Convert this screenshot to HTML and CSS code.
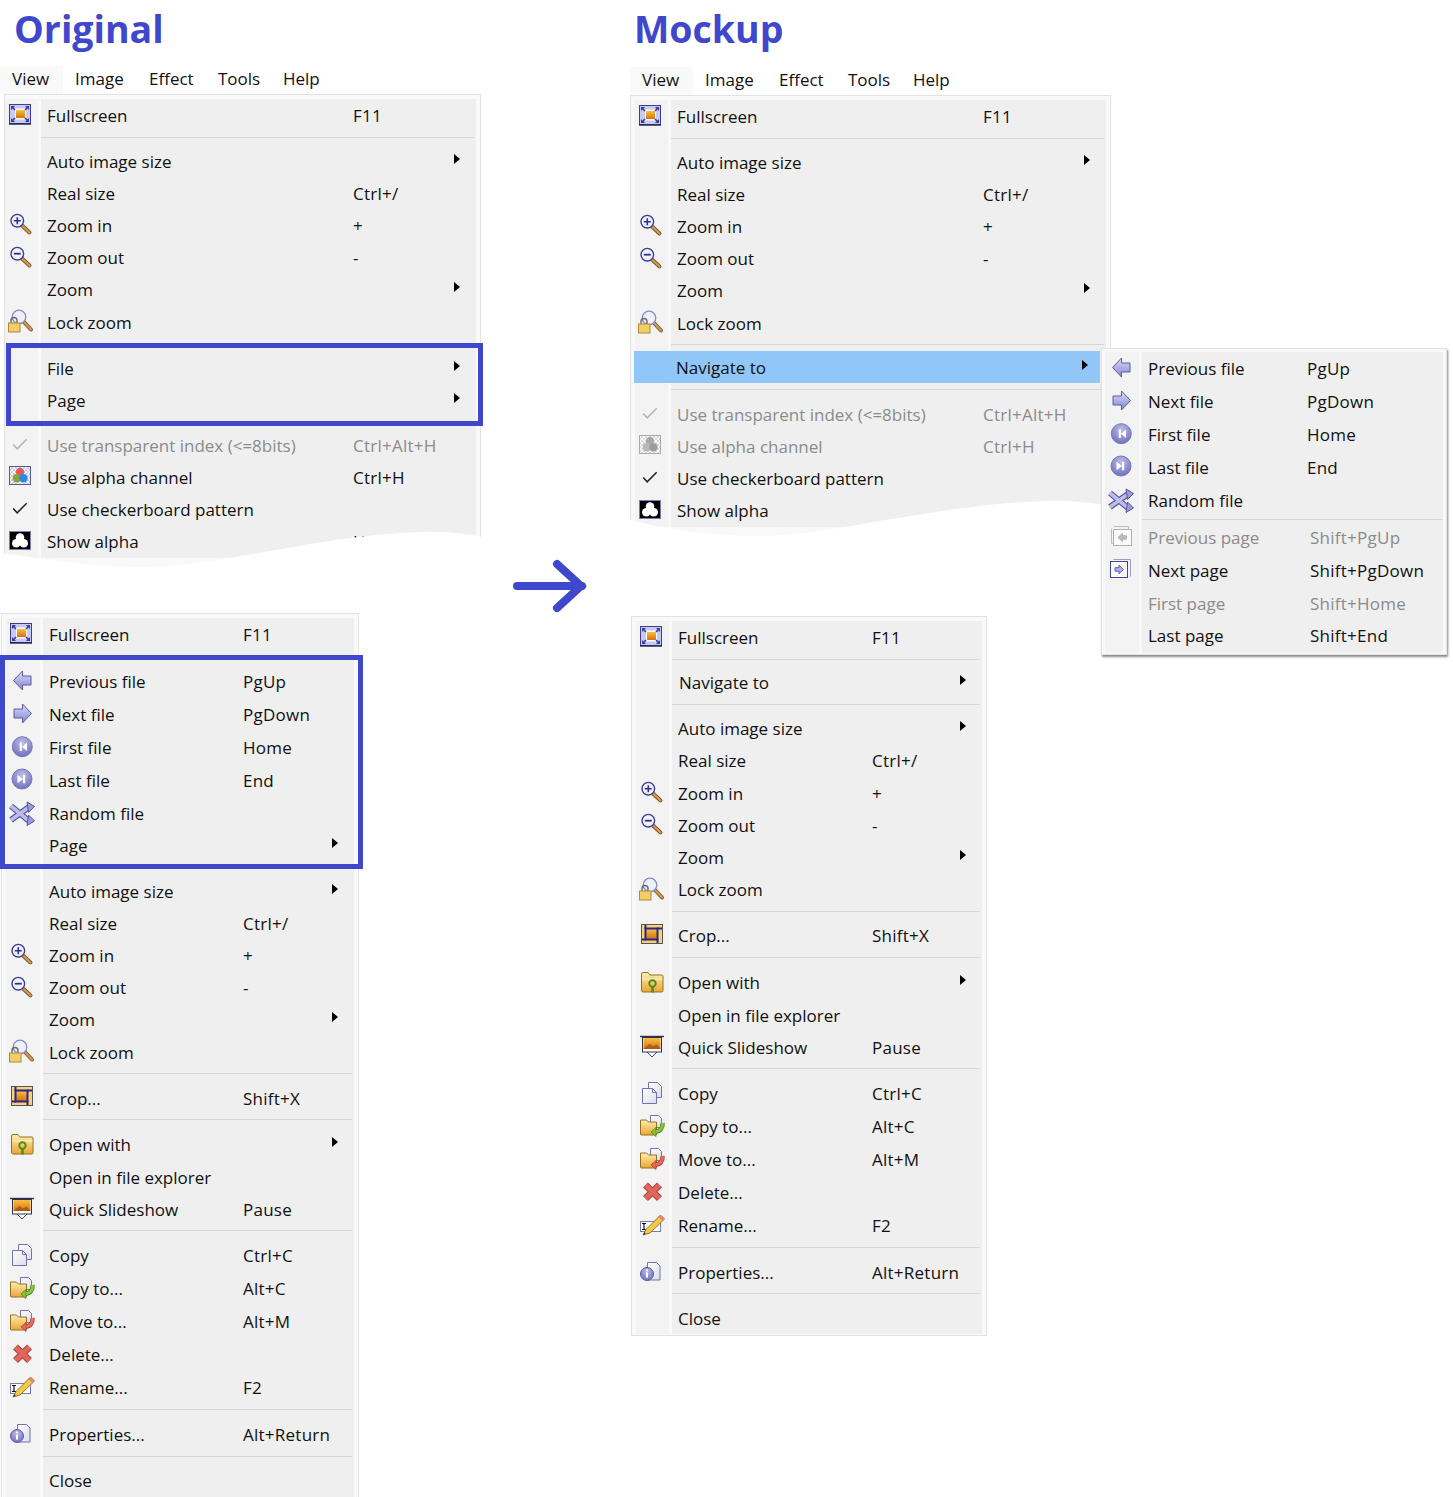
FILE: index.html
```html
<!DOCTYPE html>
<html lang="en">
<head>
  <meta charset="UTF-8">
  <title>Original and mockup of the view menu</title>
  <link rel="stylesheet" href="styles.css">
</head>
<body>

<!-- icon sheet, each icon is drawn on a 28x28 box -->
<svg class="sheet" aria-hidden="true">
  <defs>
    <linearGradient id="g-arrow" x1="0" y1="0" x2="0" y2="1"><stop offset="0" stop-color="#dcdcf8"/><stop offset="1" stop-color="#8484d2"/></linearGradient>
    <radialGradient id="g-ball" cx=".5" cy=".3" r=".75"><stop offset="0" stop-color="#bcbce8"/><stop offset="1" stop-color="#6c6cbc"/></radialGradient>
    <linearGradient id="g-photo" x1="0" y1="0" x2="0" y2="1"><stop offset="0" stop-color="#f8c040"/><stop offset="1" stop-color="#d87010"/></linearGradient>
    <linearGradient id="g-folder" x1="0" y1="0" x2="0" y2="1"><stop offset="0" stop-color="#ffeeb0"/><stop offset="1" stop-color="#e8a636"/></linearGradient>
    <linearGradient id="g-page" x1="0" y1="0" x2="1" y2="1"><stop offset="0" stop-color="#ffffff"/><stop offset="1" stop-color="#dcdce8"/></linearGradient>
    <pattern id="p-check" width="4" height="4" patternUnits="userSpaceOnUse"><rect width="4" height="4" fill="#fff"/><rect width="2" height="2" fill="#c9c9ee"/><rect x="2" y="2" width="2" height="2" fill="#c9c9ee"/></pattern>
    <pattern id="p-check-g" width="4" height="4" patternUnits="userSpaceOnUse"><rect width="4" height="4" fill="#fff"/><rect width="2" height="2" fill="#d8d8d8"/><rect x="2" y="2" width="2" height="2" fill="#d8d8d8"/></pattern>

    <symbol id="i-full" viewBox="0 0 28 28">
      <rect x="2.5" y="2.5" width="21" height="19" fill="#c9c9f5" stroke="#3c3c90"/>
      <path d="M2 22h22" stroke="#20204a" stroke-width="1.4"/>
      <rect x="8" y="6.5" width="11" height="11" fill="#fff"/>
      <rect x="9" y="8" width="9" height="8" fill="url(#g-photo)"/>
      <path d="M4 4h4l-1.4 1.4 2 2-1.2 1.2-2-2L4 8zM22 4h-4l1.4 1.4-2 2 1.2 1.2 2-2L22 8zM4 20h4l-1.4-1.4 2-2-1.2-1.2-2 2L4 16zM22 20h-4l1.400-1.400-2-2 1.200-1.200 2 2L22 16z" fill="#3c3ca0"/>
    </symbol>
    <symbol id="i-zoom-in" viewBox="0 0 28 28">
      <path d="M15 14.5l7.5 7" stroke="#7a5a30" stroke-width="4" stroke-linecap="round"/>
      <path d="M15 14.5l7.5 7" stroke="#d09a50" stroke-width="2.2" stroke-linecap="round"/>
      <circle cx="10.3" cy="9.7" r="6.3" fill="#f2f2fd" stroke="#3c3c98" stroke-width="1.4"/>
      <path d="M10.3 6.2v7M6.8 9.7h7" stroke="#30308c" stroke-width="1.6"/>
    </symbol>
    <symbol id="i-zoom-out" viewBox="0 0 28 28">
      <path d="M15 14.5l7.5 7" stroke="#7a5a30" stroke-width="4" stroke-linecap="round"/>
      <path d="M15 14.5l7.5 7" stroke="#d09a50" stroke-width="2.2" stroke-linecap="round"/>
      <circle cx="10.3" cy="9.7" r="6.3" fill="#f2f2fd" stroke="#3c3c98" stroke-width="1.4"/>
      <path d="M6.8 9.7h7" stroke="#30308c" stroke-width="1.8"/>
    </symbol>
    <symbol id="i-lock" viewBox="0 0 28 28">
      <path d="M17 14l7 7.5" stroke="#7a5a30" stroke-width="4" stroke-linecap="round"/>
      <path d="M17 14l7 7.5" stroke="#d09a50" stroke-width="2.2" stroke-linecap="round"/>
      <circle cx="12" cy="9" r="6.8" fill="#eef0fb" stroke="#8a8ac4" stroke-width="1.3"/>
      <path d="M4 15v-2.5a3 3 0 0 1 6 0V15" fill="none" stroke="#6a6a6a" stroke-width="1.4"/>
      <rect x="1.5" y="15" width="11.5" height="9" fill="#f3cd68" stroke="#ae8a3a"/>
    </symbol>
    <symbol id="i-check" viewBox="0 0 28 28">
      <path d="M6.200 13.500l4 4.300 9.500-9.600" fill="none" stroke="#222" stroke-width="1.5"/>
    </symbol>
    <symbol id="i-check-off" viewBox="0 0 28 28">
      <path d="M6.200 13.500l4 4.300 9.500-9.600" fill="none" stroke="#b4b4b4" stroke-width="1.5"/>
    </symbol>
    <symbol id="i-alpha" viewBox="0 0 28 28">
      <rect x="2.5" y="3.5" width="21" height="18" fill="url(#p-check)" stroke="#5a5a96"/>
      <circle cx="13" cy="9" r="4.2" fill="#e45a5a"/>
      <circle cx="9.8" cy="15.2" r="4.2" fill="#86a82e"/>
      <circle cx="16.4" cy="15.2" r="4.2" fill="#2c86e6"/>
    </symbol>
    <symbol id="i-alpha-off" viewBox="0 0 28 28">
      <rect x="2.5" y="3.5" width="21" height="18" fill="url(#p-check-g)" stroke="#ababab"/>
      <circle cx="13" cy="9" r="4.2" fill="#a8a8a8"/>
      <circle cx="9.8" cy="15.2" r="4.2" fill="#b8b8b8"/>
      <circle cx="16.4" cy="15.2" r="4.2" fill="#9c9c9c"/>
    </symbol>
    <symbol id="i-show" viewBox="0 0 28 28">
      <rect x="2.5" y="3.5" width="21" height="18" fill="#000" stroke="#7c7cb0"/>
      <circle cx="13" cy="9.5" r="4.300" fill="#fff"/>
      <circle cx="9.300" cy="15.300" r="4.300" fill="#fff"/>
      <circle cx="16.700" cy="15.300" r="4.300" fill="#fff"/>
    </symbol>
    <symbol id="i-prev" viewBox="0 0 28 28">
      <path d="M5.500 12.500L14.500 3v5h8.500v9h-8.500v5z" fill="url(#g-arrow)" stroke="#5c5ca4"/>
    </symbol>
    <symbol id="i-next" viewBox="0 0 28 28">
      <path d="M23.500 12.500L14.500 3v5H6v9h8.500v5z" fill="url(#g-arrow)" stroke="#5c5ca4"/>
    </symbol>
    <symbol id="i-first" viewBox="0 0 28 28">
      <circle cx="14.300" cy="12.700" r="10" fill="url(#g-ball)" stroke="#7676b8"/>
      <path d="M11.700 8.500h2.200v8.500h-2.200zM19 8.500v8.500l-5.100-4.200z" fill="#fff"/>
    </symbol>
    <symbol id="i-last" viewBox="0 0 28 28">
      <circle cx="14" cy="12" r="10" fill="url(#g-ball)" stroke="#7676b8"/>
      <path d="M15 7.800h2.200v8.500H15zM9.500 7.800v8.500l5.500-4.200z" fill="#fff"/>
    </symbol>
    <symbol id="i-random" viewBox="0 0 28 28">
      <path d="M3 6l18 15M3 20L21 7" fill="none" stroke="#55559e" stroke-width="6"/>
      <path d="M3 6l18 15M3 20L21 7" fill="none" stroke="#bcbcec" stroke-width="3.600"/>
      <path d="M19 2l7.500 4.500-6 6zM19 25.500l7.500-4.500-6-6z" fill="#9a9ade" stroke="#55559e"/>
    </symbol>
    <symbol id="i-crop" viewBox="0 0 28 28">
      <rect x="3.500" y="2.500" width="21" height="19" fill="#fbd070" stroke="#555"/>
      <rect x="8" y="7" width="11" height="10" fill="url(#g-photo)"/>
      <rect x="7.500" y="6.500" width="12" height="11" fill="none" stroke="#26268e" stroke-width="2"/>
      <path d="M7.500 3v4M19.500 17v4M4 17.500h4M19 6.500h5" stroke="#26268e" stroke-width="2"/>
    </symbol>
    <symbol id="i-openwith" viewBox="0 0 28 28">
      <path d="M3.500 21V5Q3.500 3.500 5 3.500H10L12 6H24Q25 6 25 7.500V21.500Q25 23 23.500 23H5Q3.500 23 3.500 21Z" fill="url(#g-folder)" stroke="#96701f"/>
      <path d="M4.500 10h20" stroke="#fff3c8"/>
      <circle cx="14.500" cy="14.500" r="3.200" fill="none" stroke="#4f8f1a" stroke-width="2"/>
      <path d="M14.500 17.500v6" stroke="#4f8f1a" stroke-width="2.600"/>
    </symbol>
    <symbol id="i-slide" viewBox="0 0 28 28">
      <path d="M2 2.500h24" stroke="#30304a" stroke-width="1.400"/>
      <path d="M9 18l5 5 5-5" fill="#fff" stroke="#44445e"/>
      <rect x="4.500" y="3.500" width="19" height="14.500" fill="#fff" stroke="#30304a"/>
      <rect x="5.500" y="4" width="17" height="11" fill="url(#g-photo)"/>
      <path d="M5.500 15l6-5 4 2.500 3-2 4 4.500z" fill="#b05a14"/>
    </symbol>
    <symbol id="i-copy" viewBox="0 0 28 28">
      <path d="M10.500 2.500h9l4 4v11h-13z" fill="url(#g-page)" stroke="#7272b4"/>
      <path d="M4.500 8.500h10l4 4v11h-14z" fill="url(#g-page)" stroke="#7272b4"/>
      <path d="M14.500 8.500v4h4" fill="none" stroke="#7272b4"/>
    </symbol>
    <symbol id="i-copyto" viewBox="0 0 28 28">
      <path d="M12.500 2.500h8l3 3v9h-11z" fill="url(#g-page)" stroke="#7272b4"/>
      <path d="M2.500 21V7h6l2 2h8v12a1 1 0 0 1-1 1h-14a1 1 0 0 1-1-1z" fill="url(#g-folder)" stroke="#96701f"/>
      <path d="M24.500 10C25 15 22 18.500 18 18.500" fill="none" stroke="#4b861a" stroke-width="4.400"/>
      <path d="M18 14.500L13 19l5 4.500z" fill="#8cc43c" stroke="#4b861a" stroke-width=".8"/>
      <path d="M24.500 10C25 15 22 18.500 18 18.500" fill="none" stroke="#8cc43c" stroke-width="2.800"/>
    </symbol>
    <symbol id="i-moveto" viewBox="0 0 28 28">
      <path d="M12.500 2.500h8l3 3v9h-11z" fill="url(#g-page)" stroke="#7272b4"/>
      <path d="M2.500 21V7h6l2 2h8v12a1 1 0 0 1-1 1h-14a1 1 0 0 1-1-1z" fill="url(#g-folder)" stroke="#96701f"/>
      <path d="M24.500 10C25 15 22 18.500 18 18.500" fill="none" stroke="#ac3c34" stroke-width="4.400"/>
      <path d="M18 14.500L13 19l5 4.500z" fill="#ee6a5c" stroke="#ac3c34" stroke-width=".8"/>
      <path d="M24.500 10C25 15 22 18.500 18 18.500" fill="none" stroke="#ee6a5c" stroke-width="2.800"/>
    </symbol>
    <symbol id="i-delete" viewBox="0 0 28 28">
      <path d="M7.500 6l14 13.500M21.500 6l-14 13.500" stroke="#a04640" stroke-width="7"/>
      <path d="M7.500 6l14 13.500M21.500 6l-14 13.500" stroke="#e2645a" stroke-width="5"/>
    </symbol>
    <symbol id="i-rename" viewBox="0 0 28 28">
      <rect x="2.500" y="9.500" width="20" height="10" fill="#fff" stroke="#7a7ab4"/>
      <path d="M4 11.500h4M6 11.500v6M4 17.500h4" stroke="#111" stroke-width="1.200"/>
      <path d="M5 23L8 17.500 22.500 3 26.500 7 12 21z" fill="#f4c848" stroke="#8a6c28" stroke-width=".9"/>
      <path d="M22.500 3L26.500 7 24.500 9 20.500 5z" fill="#e88080"/>
      <path d="M5 23L6.500 20.300 7.700 21.500z" fill="#222"/>
    </symbol>
    <symbol id="i-props" viewBox="0 0 28 28">
      <path d="M9.500 4.500h9l3.500 3.500v14h-12.500z" fill="url(#g-page)" stroke="#7272b4"/>
      <circle cx="9" cy="16" r="6.500" fill="url(#g-ball)" stroke="#5a5aa6"/>
      <path d="M8 14.500h2v5H8z" fill="#fff"/>
      <circle cx="9" cy="12.300" r="1.100" fill="#fff"/>
    </symbol>
    <symbol id="i-prevpage" viewBox="0 0 28 28">
      <path d="M6.500 2.500h15v3" fill="none" stroke="#bdbdbd"/>
      <path d="M4.500 4.500v15h2" fill="none" stroke="#bdbdbd"/>
      <rect x="6.500" y="5.500" width="18" height="16" fill="#fafafa" stroke="#b0b0b0"/>
      <path d="M11 13.500l4.500-4.300v2.500h4v3.500h-4v2.500z" fill="#bbb" stroke="#999" stroke-width=".6"/>
    </symbol>
    <symbol id="i-nextpage" viewBox="0 0 28 28">
      <path d="M6.500 2.500h17v17" fill="none" stroke="#9d9dc0"/>
      <rect x="3.500" y="4.500" width="17" height="16" fill="#fbfbff" stroke="#44449c"/>
      <path d="M16.500 12.500L12 8.200v2.500H8v3.500h4v2.500z" fill="#b2b2ee" stroke="#44449c" stroke-width=".8"/>
    </symbol>
  </defs>
</svg>

<div class="page">

  <!-- arrow between the two versions -->
  <svg class="swap-arrow" viewBox="0 0 80 62">
    <path d="M7 31H72" fill="none" stroke="#3f48cc" stroke-width="8" stroke-linecap="round"/>
    <path d="M47 9L71 31L47 53" fill="none" stroke="#3f48cc" stroke-width="8" stroke-linecap="round"/>
  </svg>

  <div class="col col-original">
    <h1>Original</h1>
    <div class="bar">
      <span class="open">View</span><span>Image</span><span>Effect</span><span>Tools</span><span>Help</span>
    </div>

    <div class="menu wide torn orig-top">
      <div class="row first"><span class="ico"><svg><use href="#i-full"/></svg></span><div class="body"><span class="lbl">Fullscreen</span><span class="key">F11</span></div></div>
      <div class="sep tight"><span class="ico"></span><div class="body"><hr></div></div>
      <div class="row"><span class="ico"></span><div class="body"><span class="lbl">Auto image size</span><i class="arrow"></i></div></div>
      <div class="row"><span class="ico"></span><div class="body"><span class="lbl">Real size</span><span class="key">Ctrl+/</span></div></div>
      <div class="row"><span class="ico"><svg><use href="#i-zoom-in"/></svg></span><div class="body"><span class="lbl">Zoom in</span><span class="key">+</span></div></div>
      <div class="row"><span class="ico"><svg><use href="#i-zoom-out"/></svg></span><div class="body"><span class="lbl">Zoom out</span><span class="key">-</span></div></div>
      <div class="row"><span class="ico"></span><div class="body"><span class="lbl">Zoom</span><i class="arrow"></i></div></div>
      <div class="row"><span class="ico"><svg><use href="#i-lock"/></svg></span><div class="body"><span class="lbl">Lock zoom</span></div></div>
      <div class="sep"><span class="ico"></span><div class="body"><hr></div></div>
      <div class="marked mark-top">
        <div class="row"><span class="ico"></span><div class="body"><span class="lbl">File</span><i class="arrow"></i></div></div>
        <div class="row"><span class="ico"></span><div class="body"><span class="lbl">Page</span><i class="arrow"></i></div></div>
      </div>
      <div class="sep short"><span class="ico"></span><div class="body"><hr></div></div>
      <div class="row off"><span class="ico"><svg><use href="#i-check-off"/></svg></span><div class="body"><span class="lbl">Use transparent index (&lt;=8bits)</span><span class="key">Ctrl+Alt+H</span></div></div>
      <div class="row"><span class="ico"><svg><use href="#i-alpha"/></svg></span><div class="body"><span class="lbl">Use alpha channel</span><span class="key">Ctrl+H</span></div></div>
      <div class="row"><span class="ico"><svg><use href="#i-check"/></svg></span><div class="body"><span class="lbl">Use checkerboard pattern</span></div></div>
      <div class="row"><span class="ico"><svg><use href="#i-show"/></svg></span><div class="body"><span class="lbl">Show alpha</span><span class="key">H</span></div></div>
      <svg class="tear tear-left" viewBox="0 0 490 45"><path d="M0 23C40 28 90 37 140 37C220 37 320 5 420 2C450 1 470 4 490 9V45H0Z" fill="#fff"/></svg>
    </div>

    <div class="menu narrow orig-bottom">
      <div class="row first"><span class="ico"><svg><use href="#i-full"/></svg></span><div class="body"><span class="lbl">Fullscreen</span><span class="key">F11</span></div></div>
      <div class="sep"><span class="ico"></span><div class="body"><hr></div></div>
      <div class="marked mark-bottom">
        <div class="row tall"><span class="ico"><svg><use href="#i-prev"/></svg></span><div class="body"><span class="lbl">Previous file</span><span class="key">PgUp</span></div></div>
        <div class="row tall"><span class="ico"><svg><use href="#i-next"/></svg></span><div class="body"><span class="lbl">Next file</span><span class="key">PgDown</span></div></div>
        <div class="row tall"><span class="ico"><svg><use href="#i-first"/></svg></span><div class="body"><span class="lbl">First file</span><span class="key">Home</span></div></div>
        <div class="row tall"><span class="ico"><svg><use href="#i-last"/></svg></span><div class="body"><span class="lbl">Last file</span><span class="key">End</span></div></div>
        <div class="row tall"><span class="ico"><svg><use href="#i-random"/></svg></span><div class="body"><span class="lbl">Random file</span></div></div>
        <div class="row low"><span class="ico"></span><div class="body"><span class="lbl">Page</span><i class="arrow"></i></div></div>
      </div>
      <div class="sep"><span class="ico"></span><div class="body"><hr></div></div>
      <div class="row"><span class="ico"></span><div class="body"><span class="lbl">Auto image size</span><i class="arrow"></i></div></div>
      <div class="row"><span class="ico"></span><div class="body"><span class="lbl">Real size</span><span class="key">Ctrl+/</span></div></div>
      <div class="row"><span class="ico"><svg><use href="#i-zoom-in"/></svg></span><div class="body"><span class="lbl">Zoom in</span><span class="key">+</span></div></div>
      <div class="row"><span class="ico"><svg><use href="#i-zoom-out"/></svg></span><div class="body"><span class="lbl">Zoom out</span><span class="key">-</span></div></div>
      <div class="row"><span class="ico"></span><div class="body"><span class="lbl">Zoom</span><i class="arrow"></i></div></div>
      <div class="row"><span class="ico"><svg><use href="#i-lock"/></svg></span><div class="body"><span class="lbl">Lock zoom</span></div></div>
      <div class="sep"><span class="ico"></span><div class="body"><hr></div></div>
      <div class="row"><span class="ico"><svg><use href="#i-crop"/></svg></span><div class="body"><span class="lbl">Crop...</span><span class="key">Shift+X</span></div></div>
      <div class="sep"><span class="ico"></span><div class="body"><hr></div></div>
      <div class="row tall"><span class="ico"><svg><use href="#i-openwith"/></svg></span><div class="body"><span class="lbl">Open with</span><i class="arrow"></i></div></div>
      <div class="row tall"><span class="ico"></span><div class="body"><span class="lbl">Open in file explorer</span></div></div>
      <div class="row low"><span class="ico"><svg><use href="#i-slide"/></svg></span><div class="body"><span class="lbl">Quick Slideshow</span><span class="key">Pause</span></div></div>
      <div class="sep"><span class="ico"></span><div class="body"><hr></div></div>
      <div class="row tall"><span class="ico"><svg><use href="#i-copy"/></svg></span><div class="body"><span class="lbl">Copy</span><span class="key">Ctrl+C</span></div></div>
      <div class="row tall"><span class="ico"><svg><use href="#i-copyto"/></svg></span><div class="body"><span class="lbl">Copy to...</span><span class="key">Alt+C</span></div></div>
      <div class="row tall"><span class="ico"><svg><use href="#i-moveto"/></svg></span><div class="body"><span class="lbl">Move to...</span><span class="key">Alt+M</span></div></div>
      <div class="row tall"><span class="ico"><svg><use href="#i-delete"/></svg></span><div class="body"><span class="lbl">Delete...</span></div></div>
      <div class="row tall"><span class="ico"><svg><use href="#i-rename"/></svg></span><div class="body"><span class="lbl">Rename...</span><span class="key">F2</span></div></div>
      <div class="sep"><span class="ico"></span><div class="body"><hr></div></div>
      <div class="row"><span class="ico"><svg><use href="#i-props"/></svg></span><div class="body"><span class="lbl">Properties...</span><span class="key">Alt+Return</span></div></div>
      <div class="sep"><span class="ico"></span><div class="body"><hr></div></div>
      <div class="row"><span class="ico"></span><div class="body"><span class="lbl">Close</span></div></div>
    </div>
  </div>

  <div class="col col-mockup">
    <h1>Mockup</h1>
    <div class="bar">
      <span class="open">View</span><span>Image</span><span>Effect</span><span>Tools</span><span>Help</span>
    </div>

    <div class="menu wide torn mock-top">
      <div class="row first"><span class="ico"><svg><use href="#i-full"/></svg></span><div class="body"><span class="lbl">Fullscreen</span><span class="key">F11</span></div></div>
      <div class="sep tight"><span class="ico"></span><div class="body"><hr></div></div>
      <div class="row"><span class="ico"></span><div class="body"><span class="lbl">Auto image size</span><i class="arrow"></i></div></div>
      <div class="row"><span class="ico"></span><div class="body"><span class="lbl">Real size</span><span class="key">Ctrl+/</span></div></div>
      <div class="row"><span class="ico"><svg><use href="#i-zoom-in"/></svg></span><div class="body"><span class="lbl">Zoom in</span><span class="key">+</span></div></div>
      <div class="row"><span class="ico"><svg><use href="#i-zoom-out"/></svg></span><div class="body"><span class="lbl">Zoom out</span><span class="key">-</span></div></div>
      <div class="row"><span class="ico"></span><div class="body"><span class="lbl">Zoom</span><i class="arrow"></i></div></div>
      <div class="row"><span class="ico"><svg><use href="#i-lock"/></svg></span><div class="body"><span class="lbl">Lock zoom</span></div></div>
      <div class="sep before-hover"><span class="ico"></span><div class="body"><hr></div></div>
      <div class="row hover"><span class="lbl">Navigate to</span><i class="arrow"></i></div>
      <div class="sep after-hover"><span class="ico"></span><div class="body"><hr></div></div>
      <div class="row off"><span class="ico"><svg><use href="#i-check-off"/></svg></span><div class="body"><span class="lbl">Use transparent index (&lt;=8bits)</span><span class="key">Ctrl+Alt+H</span></div></div>
      <div class="row off"><span class="ico"><svg><use href="#i-alpha-off"/></svg></span><div class="body"><span class="lbl">Use alpha channel</span><span class="key">Ctrl+H</span></div></div>
      <div class="row"><span class="ico"><svg><use href="#i-check"/></svg></span><div class="body"><span class="lbl">Use checkerboard pattern</span></div></div>
      <div class="row"><span class="ico"><svg><use href="#i-show"/></svg></span><div class="body"><span class="lbl">Show alpha</span></div></div>
      <svg class="tear tear-right" viewBox="0 0 485 47"><path d="M0 21C30 30 80 38 132 38C200 38 300 8 412 3C440 2 460 4 485 8V47H0Z" fill="#fff"/></svg>

      <div class="menu submenu">
        <div class="row tall"><span class="ico"><svg><use href="#i-prev"/></svg></span><div class="body"><span class="lbl">Previous file</span><span class="key">PgUp</span></div></div>
        <div class="row tall"><span class="ico"><svg><use href="#i-next"/></svg></span><div class="body"><span class="lbl">Next file</span><span class="key">PgDown</span></div></div>
        <div class="row tall"><span class="ico"><svg><use href="#i-first"/></svg></span><div class="body"><span class="lbl">First file</span><span class="key">Home</span></div></div>
        <div class="row tall"><span class="ico"><svg><use href="#i-last"/></svg></span><div class="body"><span class="lbl">Last file</span><span class="key">End</span></div></div>
        <div class="row tall"><span class="ico"><svg><use href="#i-random"/></svg></span><div class="body"><span class="lbl">Random file</span></div></div>
        <div class="sep thin"><span class="ico"></span><div class="body"><hr></div></div>
        <div class="row tall off page-row"><span class="ico"><svg><use href="#i-prevpage"/></svg></span><div class="body"><span class="lbl">Previous page</span><span class="key">Shift+PgUp</span></div></div>
        <div class="row tall page-row"><span class="ico"><svg><use href="#i-nextpage"/></svg></span><div class="body"><span class="lbl">Next page</span><span class="key">Shift+PgDown</span></div></div>
        <div class="row tall off page-row"><span class="ico"></span><div class="body"><span class="lbl">First page</span><span class="key">Shift+Home</span></div></div>
        <div class="row tall last-page page-row"><span class="ico"></span><div class="body"><span class="lbl">Last page</span><span class="key">Shift+End</span></div></div>
      </div>
    </div>

    <div class="menu narrow mock-bottom">
      <div class="row first"><span class="ico"><svg><use href="#i-full"/></svg></span><div class="body"><span class="lbl">Fullscreen</span><span class="key">F11</span></div></div>
      <div class="sep short"><span class="ico"></span><div class="body"><hr></div></div>
      <div class="row nudge"><span class="ico"></span><div class="body"><span class="lbl">Navigate to</span><i class="arrow"></i></div></div>
      <div class="sep"><span class="ico"></span><div class="body"><hr></div></div>
      <div class="row"><span class="ico"></span><div class="body"><span class="lbl">Auto image size</span><i class="arrow"></i></div></div>
      <div class="row"><span class="ico"></span><div class="body"><span class="lbl">Real size</span><span class="key">Ctrl+/</span></div></div>
      <div class="row"><span class="ico"><svg><use href="#i-zoom-in"/></svg></span><div class="body"><span class="lbl">Zoom in</span><span class="key">+</span></div></div>
      <div class="row"><span class="ico"><svg><use href="#i-zoom-out"/></svg></span><div class="body"><span class="lbl">Zoom out</span><span class="key">-</span></div></div>
      <div class="row"><span class="ico"></span><div class="body"><span class="lbl">Zoom</span><i class="arrow"></i></div></div>
      <div class="row"><span class="ico"><svg><use href="#i-lock"/></svg></span><div class="body"><span class="lbl">Lock zoom</span></div></div>
      <div class="sep"><span class="ico"></span><div class="body"><hr></div></div>
      <div class="row"><span class="ico"><svg><use href="#i-crop"/></svg></span><div class="body"><span class="lbl">Crop...</span><span class="key">Shift+X</span></div></div>
      <div class="sep"><span class="ico"></span><div class="body"><hr></div></div>
      <div class="row tall"><span class="ico"><svg><use href="#i-openwith"/></svg></span><div class="body"><span class="lbl">Open with</span><i class="arrow"></i></div></div>
      <div class="row tall"><span class="ico"></span><div class="body"><span class="lbl">Open in file explorer</span></div></div>
      <div class="row low"><span class="ico"><svg><use href="#i-slide"/></svg></span><div class="body"><span class="lbl">Quick Slideshow</span><span class="key">Pause</span></div></div>
      <div class="sep"><span class="ico"></span><div class="body"><hr></div></div>
      <div class="row tall"><span class="ico"><svg><use href="#i-copy"/></svg></span><div class="body"><span class="lbl">Copy</span><span class="key">Ctrl+C</span></div></div>
      <div class="row tall"><span class="ico"><svg><use href="#i-copyto"/></svg></span><div class="body"><span class="lbl">Copy to...</span><span class="key">Alt+C</span></div></div>
      <div class="row tall"><span class="ico"><svg><use href="#i-moveto"/></svg></span><div class="body"><span class="lbl">Move to...</span><span class="key">Alt+M</span></div></div>
      <div class="row tall"><span class="ico"><svg><use href="#i-delete"/></svg></span><div class="body"><span class="lbl">Delete...</span></div></div>
      <div class="row tall"><span class="ico"><svg><use href="#i-rename"/></svg></span><div class="body"><span class="lbl">Rename...</span><span class="key">F2</span></div></div>
      <div class="sep"><span class="ico"></span><div class="body"><hr></div></div>
      <div class="row"><span class="ico"><svg><use href="#i-props"/></svg></span><div class="body"><span class="lbl">Properties...</span><span class="key">Alt+Return</span></div></div>
      <div class="sep"><span class="ico"></span><div class="body"><hr></div></div>
      <div class="row"><span class="ico"></span><div class="body"><span class="lbl">Close</span></div></div>
    </div>
  </div>

</div>

</body>
</html>
```

FILE: styles.css
```css
* { margin: 0; padding: 0; box-sizing: border-box; }
html, body { height: 100%; overflow: hidden; background: #fff; }
body { font-family: "Open Sans", "Noto Sans", sans-serif; font-size: 17px; color: #111; }

.sheet { position: absolute; width: 0; height: 0; }

.page { position: relative; display: grid; grid-template-columns: 630px 1fr; width: 1453px; height: 1497px; }
.swap-arrow { position: absolute; left: 510px; top: 555px; width: 80px; height: 62px; }

/* title and menu bar */
h1 { height: 66px; padding-left: 14px; font-size: 37.5px; font-weight: 700; line-height: 57px; color: #3f48cc; }
.col-mockup h1 { height: 67px; padding-left: 4px; }

.bar { display: grid; grid-template-columns: 63px 74px 69px 65px 1fr; height: 28px; }
.bar span { padding-left: 12px; line-height: 25px; }
.bar .open { background: #f9f9f9; }

/* menu frame */
.menu { position: relative; --ico: 33px; --lbl: 306px; --row: 32.2px; padding: 4px; background: #f9f9f9; border: 1px solid #e2e2e2; }
.wide { --lbl: 306px; }
.narrow { --lbl: 194px; }

.orig-top { width: 477px; height: 476px; margin: 0 0 43px 4px; padding-left: 0; }
.orig-bottom { width: 358px; margin-left: 1px; --ico: 34px; }
.mock-top { width: 481px; height: 445px; margin-bottom: 76px; }
.mock-bottom { width: 356px; margin-left: 1px; padding-bottom: 1px; }

/* rows */
.row, .sep { display: flex; gap: 3px; }
.row { height: var(--row); }
.row.first { height: 33px; }
.row.tall { height: 33px; }
.row.low { height: 31px; }
.sep { height: 14px; }
.sep.tight { height: 13px; }
.sep.short { height: 12.5px; }

.ico { flex: none; display: flex; align-items: center; width: var(--ico); background: #f3f3f3; }
.ico svg { width: 28px; height: 28px; margin-left: 2px; }
.body { flex: 1; display: flex; align-items: center; padding-left: 6px; background: #efefef; }
.lbl { flex: none; width: var(--lbl); white-space: nowrap; }
.key { white-space: nowrap; letter-spacing: .25px; }
.off { color: #8b8b8b; }
.nudge .lbl { padding-left: 1px; }

.sep .body { display: block; padding: 5px 2px 0 0; }
hr { height: 1px; border: 0; background: #d6d6d6; }

/* submenu arrow */
.arrow { width: 0; height: 0; margin: -5px 16px 0 auto; border-left: 6px solid #000; border-top: 5px solid transparent; border-bottom: 5px solid transparent; }

/* open item in the mockup */
.row.hover { display: flex; align-items: center; height: 32px; margin: 0 6px 0 -1px; padding: 2px 0 0 42px; background: #90c6f8; }
.before-hover { height: 11.8px; }
.after-hover { height: 15px; }
.after-hover .body { padding-top: 6px; }
.row.hover .arrow { margin-right: 12px; }

/* submenu */
.submenu { position: absolute; left: 470px; top: 252px; z-index: 2; width: 346px; height: 307px; padding: 3px; --ico: 34px; --lbl: 159px; box-shadow: 1px 2px 2px #8a8a8a; }
.sep.thin { height: 4px; }
.sep.thin .body { padding-top: 2px; padding-right: 0; }
.page-row .lbl { width: 162px; }
.last-page .body, .last-page .ico { padding-bottom: 3px; }

/* blue highlight frames */
.marked { position: relative; }
.marked::after { content: ""; position: absolute; border: 5px solid #3f48cc; z-index: 1; }
.mark-top::after { top: -9px; right: -7px; bottom: -9px; left: 1px; }
.mark-bottom::after { top: -10px; right: -9px; bottom: -8px; left: -6px; }

/* torn off lower edge */
.tear { position: absolute; }
.tear-left { left: -5px; bottom: -6px; width: 490px; height: 45px; }
.tear-right { left: -3px; bottom: -6px; width: 485px; height: 47px; }
```
